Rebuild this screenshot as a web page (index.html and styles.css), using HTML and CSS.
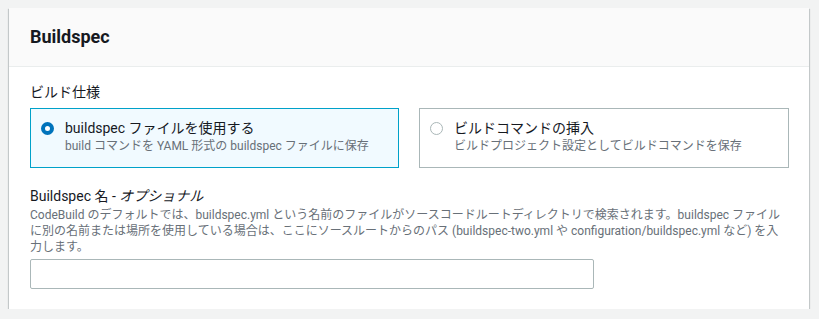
FILE: index.html
```html
<!DOCTYPE html>
<html lang="ja">
<head>
<meta charset="utf-8">
<link rel="stylesheet" href="styles.css">
</head>
<body>
<div class="card">
  <div class="card-header">
    <h2 class="title">Buildspec</h2>
  </div>
  <div class="card-body">
    <div class="label">ビルド仕様</div>
    <div class="tiles">
      <div class="tile selected">
        <span class="radio on"></span>
        <div class="tile-text">
          <div class="tile-label">buildspec ファイルを使用する</div>
          <div class="tile-desc">build コマンドを YAML 形式の buildspec ファイルに保存</div>
        </div>
      </div>
      <div class="tile">
        <span class="radio"></span>
        <div class="tile-text">
          <div class="tile-label">ビルドコマンドの挿入</div>
          <div class="tile-desc">ビルドプロジェクト設定としてビルドコマンドを保存</div>
        </div>
      </div>
    </div>
    <div class="label label-2">Buildspec 名 - <i>オプショナル</i></div>
    <div class="desc">CodeBuild のデフォルトでは、buildspec.yml という名前のファイルがソースコードルートディレクトリで検索されます。buildspec ファイルに別の名前または場所を使用している場合は、ここにソースルートからのパス (buildspec-two.yml や configuration/buildspec.yml など) を入力します。</div>
    <input class="input" type="text">
  </div>
</div>
</body>
</html>
```

FILE: styles.css
```css
* { box-sizing: border-box; }
body {
  margin: 0;
  background: #f2f3f3;
  font-family: Roboto, "Noto Sans CJK JP", sans-serif;
  color: #16191f;
}
.card {
  margin: 8px 0 0 9px;
  width: 800px;
  height: 301px;
  background: #fff;
  box-shadow: 0 1px 1px 0 rgba(0,28,36,.3), 1px 1px 1px 0 rgba(0,28,36,.15), -1px 1px 1px 0 rgba(0,28,36,.15);
}
.card-header {
  background: #fafafa;
  border-bottom: 1px solid #eaeded;
  height: 59px;
  padding: 18px 20px 0 21px;
}
.title {
  margin: 0;
  font-size: 18px;
  line-height: 22px;
  font-weight: 700;
}
.card-body {
  padding: 14px 20px 20px 21px;
}
.label {
  font-size: 14px;
  line-height: 22px;
}
.label i { font-style: italic; }
.tiles {
  margin-top: 5px;
  display: grid;
  grid-template-columns: 369px 370px;
  column-gap: 20px;
}
.tile {
  height: 60px;
  border: 1px solid #aab7b8;
  padding: 9px 10px 0 10px;
  display: flex;
  align-items: flex-start;
  gap: 11px;
}
.tile.selected {
  background: #f1faff;
  border-color: #00a1c9;
}
.radio {
  flex: none;
  width: 13px;
  height: 13px;
  margin-top: 4px;
  border-radius: 50%;
  border: 1px solid #aab7b8;
  background: #fff;
}
.radio.on {
  border: 4px solid #0073bb;
}
.tile-label {
  font-size: 14px;
  line-height: 20px;
}
.tile-desc {
  font-size: 12px;
  line-height: 16px;
  color: #687078;
}
.label-2 { margin-top: 17px; }
.desc {
  max-width: 752px;
  font-size: 12px;
  line-height: 16px;
  color: #687078;
}
.input {
  display: block;
  margin-top: 4px;
  width: 564px;
  height: 30px;
  border: 1px solid #aab7b8;
  border-radius: 2px;
  background: #fff;
  padding: 4px 10px;
  font: inherit;
}
```
